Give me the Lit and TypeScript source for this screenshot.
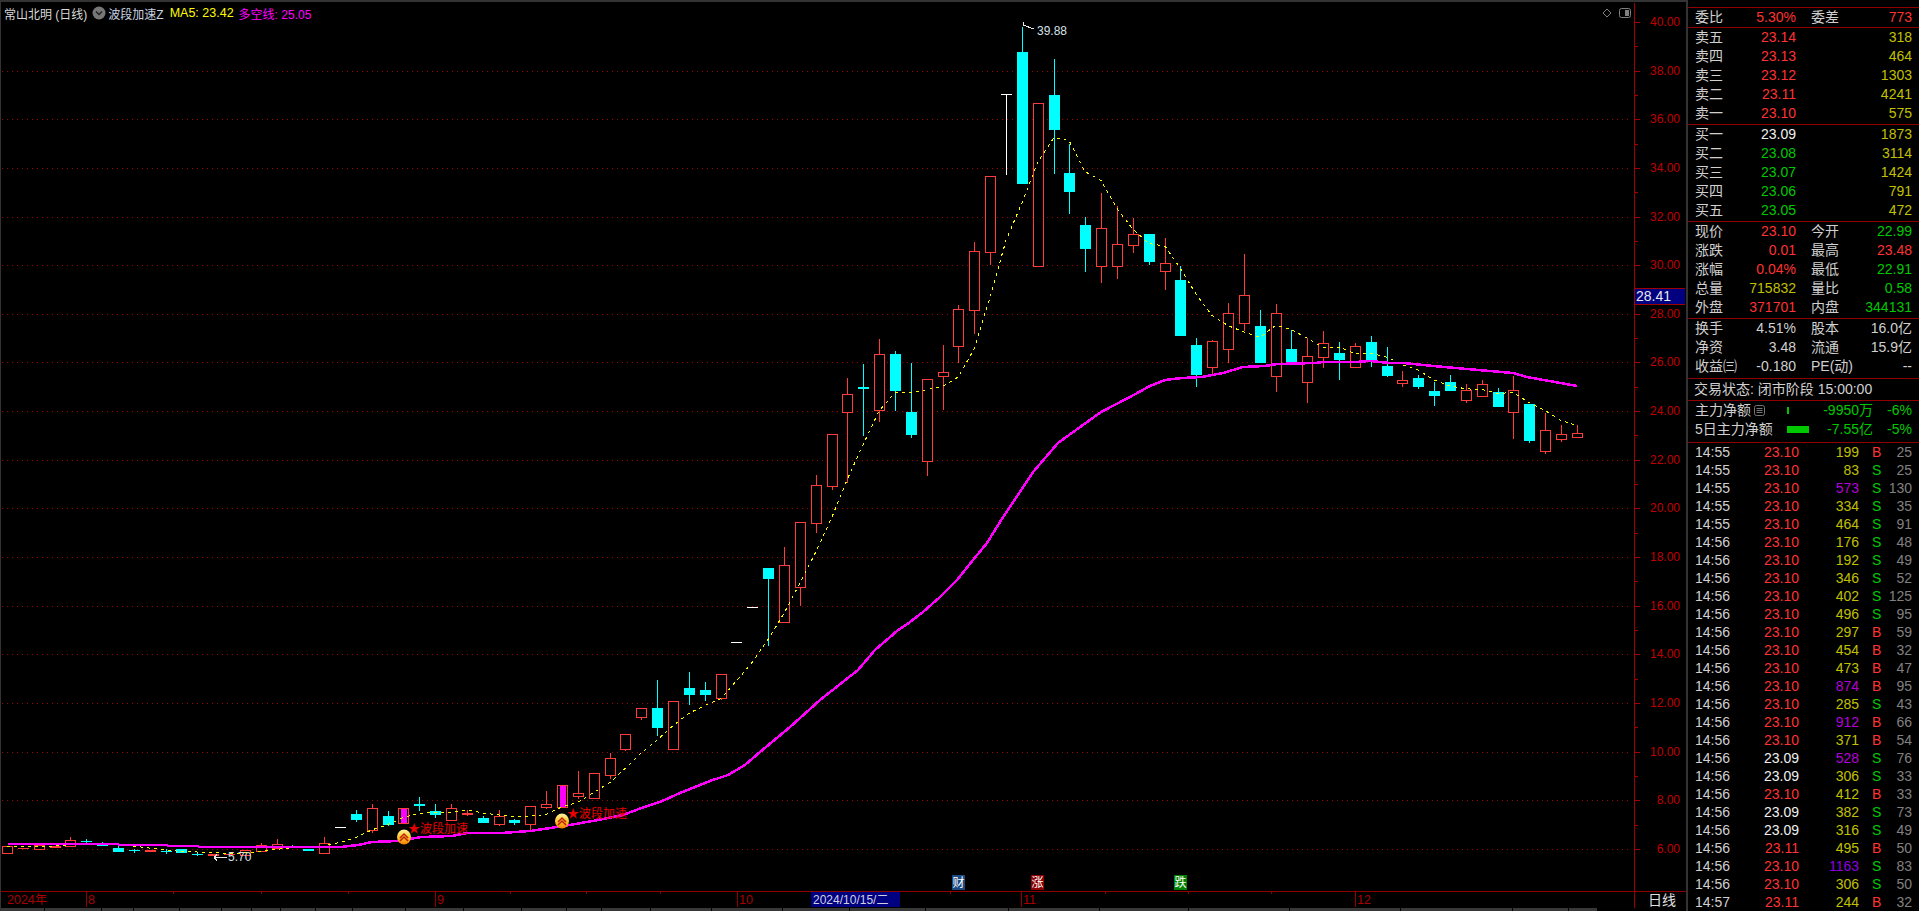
import { LitElement, html, css, svg } from "lit";
import { customElement } from "lit/decorators.js";

type C = [string, number, number, number, number];
// type, body top, body bottom, wick top, wick bottom (pixel rows on the plot)
const CANDLES: C[] = [
  ["r",846,852.7,846,854],["f",847.5,849,847.5,849],["r",845,848.5,845,849],["f",846,847.5,846,847.5],["r",840,846,837,846],
  ["c",841,842,839,843],["c",844,845.5,842,845.5],["c",848,852,845,852],["c",850,851,848.5,852.5],["f",850,852,850,852],
  ["c",851,852,849,854],["c",849,852.7,849,852.7],["c",853.5,854.5,852,856],["f",854,856,854,856],["f",853.5,855,853.5,855],
  ["r",850,855,850,855],["r",845,851,843,851],["r",844,848,839,848],["c",846,847,844.5,848],["c",849,851,849,851],
  ["r",843,852.7,837,852.7],["w",827,827,827,827],["c",814,820,810,822],["r",808,830,804,833],["c",816,825,811,826],
  ["m",808,823,808,823],["c",804,806,797,811],["c",811,815,804,818],["r",808,820,804,821],["f",813,815,810,816],
  ["c",818,823,816,823],["r",816,824,810,826],["c",820,823,819,825],["r",806,824,806,830],["r",804,807,791,809],
  ["m",785,807,785,807],["r",793,796,771,799],["r",773,798,773,798],["r",758,775,753,779],["r",734,749,734,751],
  ["r",708,717,708,720],["c",708,728,680,736],["r",701,749,701,749],["c",688,695,672,705],["c",690,695,682,701],
  ["r",674,698,674,700],["w",642,642,642,642],["w",607,607,607,607],["c",568,579,568,646],["r",565,622,547,622],
  ["r",522,587,522,606],["r",485,523,475,533],["r",434,486,434,490],["r",394,412,378,483],["c",387,389,364,436],
  ["r",354,410,339,422],["c",354,391,351,411],["c",412,435,363,438],["r",379,461,379,476],["r",372,376,345,410],
  ["r",309,346,305,363],["r",251,310,242,334],["r",176,252,176,265],["w",94,94,94,175],["c",52,184,27,184],
  ["r",103,266,103,266],["c",95,130,59,174],["c",173,192,144,214],["c",225,249,217,272],["r",228,266,193,283],
  ["r",244,266,206,279],["r",234,245,218,253],["c",234,262,234,265],["r",263,271,238,290],["c",280,336,266,336],
  ["c",345,375,338,387],["r",341,367,340,375],["r",313,349,303,363],["r",295,323,254,331],["c",326,363,310,363],
  ["r",313,376,304,392],["c",349,363,330,363],["r",356,382,338,403],["r",343,357,331,368],["c",353,360,342,380],
  ["r",346,367,343,368],["c",342,361,336,367],["c",366,376,347,377],["r",380,383,371,387],["c",378,387,375,389],
  ["c",391,396,382,406],["c",382,391,375,391],["r",390,400,384,403],["r",384,396,380,396],["c",392,407,388,407],
  ["r",390,412,376,439],["c",404,441,404,443],["r",430,451,413,454],["r",434,439,425,442],["r",433,437,425,438],
];

const MAGENTA = "8,844 118,844 119,845 167,845 168,846 198,846 199,847 341,847 358,845 372,842 398,841 421,837 452,836 467,833 501,833 530,831 564,826 598,820 623,815 644,807 660,802 680,793 710,781 728,775 745,765 760,752 790,727 820,700 858,670 875,650 897,631 910,622 923,612 940,597 957,580 973,560 987,543 1000,522 1034,471 1058,443 1101,412 1130,397 1150,386 1165,380 1182,378 1202,377 1223,373 1243,367 1265,366 1277,364 1315,363 1323,362 1355,362 1370,361 1390,363 1403,363 1433,366 1467,369 1513,373 1527,377 1577,386";

const PRICES = [40,38,36,34,32,30,28,26,24,22,20,18,16,14,12,10,8,6];
const priceY = (p: number) => Math.round(22 + (40 - p) * 24.32);
const candleX = (k: number) => Math.floor(7.5 + 15.857 * k);
const FOOT = [43,56,31,45,41,29,28,34,36,52,57,57,44,34,48,60,70,66,75,82,90,88,100,110,111,55,28];

const ma5 = () =>
  CANDLES.map((_, k) => {
    const w = CANDLES.slice(Math.max(0, k - 4), k + 1);
    const avg = w.reduce((s, c) => s + (c[0] === "c" ? c[2] : c[1]), 0) / w.length;
    return `${candleX(k)},${avg.toFixed(1)}`;
  }).join(" ");

const ASK = [["卖五","23.14","318"],["卖四","23.13","464"],["卖三","23.12","1303"],["卖二","23.11","4241"],["卖一","23.10","575"]];
const BID = [["买一","23.09","1873","wh"],["买二","23.08","3114","gr"],["买三","23.07","1424","gr"],["买四","23.06","791","gr"],["买五","23.05","472","gr"]];
const QUOTE = [
  ["现价","23.10","rd","今开","22.99","gr"],["涨跌","0.01","rd","最高","23.48","rd"],["涨幅","0.04%","rd","最低","22.91","gr"],
  ["总量","715832","yl","量比","0.58","gr"],["外盘","371701","rd","内盘","344131","gr"],
];
const STATS = [["换手","4.51%","股本","16.0亿"],["净资","3.48","流通","15.9亿"],["收益㈢","-0.180","PE(动)","--"]];
const TICKS: [string,string,string,string,string,string][] = [
  ["14:55","23.10","199","yl","B","25"],["14:55","23.10","83","yl","S","25"],["14:55","23.10","573","pu","S","130"],["14:55","23.10","334","yl","S","35"],
  ["14:55","23.10","464","yl","S","91"],["14:56","23.10","176","yl","S","48"],["14:56","23.10","192","yl","S","49"],["14:56","23.10","346","yl","S","52"],
  ["14:56","23.10","402","yl","S","125"],["14:56","23.10","496","yl","S","95"],["14:56","23.10","297","yl","B","59"],["14:56","23.10","454","yl","B","32"],
  ["14:56","23.10","473","yl","B","47"],["14:56","23.10","874","pu","B","95"],["14:56","23.10","285","yl","S","43"],["14:56","23.10","912","pu","B","66"],
  ["14:56","23.10","371","yl","B","54"],["14:56","23.09","528","pu","S","76"],["14:56","23.09","306","yl","S","33"],["14:56","23.10","412","yl","B","33"],
  ["14:56","23.09","382","yl","S","73"],["14:56","23.09","316","yl","S","49"],["14:56","23.11","495","yl","B","50"],["14:56","23.10","1163","vi","S","83"],
  ["14:56","23.10","306","yl","S","50"],["14:57","23.11","244","yl","B","32"],
];

@customElement("app-root")
export class AppRoot extends LitElement {
  static styles = css`
    :host { display: flex; width: 1919px; height: 911px; background: #000; overflow: hidden;
      font-family: "Liberation Sans", "Noto Sans CJK SC", sans-serif; color: #d0d0d0; }
    .chart { width: 1686px; height: 911px; display: flex; flex-direction: column; box-sizing: border-box;
      border-left: 1px solid #333; }
    .topline { height: 2px; background: #333; }
    .head { height: 22px; display: flex; align-items: center; gap: 5px; padding-left: 3px; font-size: 12px; white-space: nowrap; }
    .head .ma { color: #ffff00; margin-left: 1px; font-size: 12.5px; }
    .head .dk { color: #ff00ff; }
    .head .name { color: #d8d8d8; }
    .head .ind { color: #c8d4e0; margin-left: -3px; }
    .plot { display: block; width: 1685px; height: 884px; overflow: visible; }
    .foot { height: 3px; display: flex; gap: 1px; overflow: hidden; }
    .foot span { height: 3px; background: #383838; flex: none; }
    .plot text { font-family: "Liberation Sans", "Noto Sans CJK SC", sans-serif; font-size: 12px; }
    .axis { fill: #c00000; text-anchor: end; }
    .plot .time { fill: #a80000; font-size: 12.5px; }
    .sig { fill: #e80000; }
    .mark { fill: #d8e0e8; }
    .plot .cur { fill: #e8e8e8; font-size: 14px; }
    .date { fill: #d0d0e0; }
    .bd { fill: #fff; text-anchor: middle; }
    .plot .cycle { fill: #e0e0e0; font-size: 14px; }

    .panel { width: 233px; height: 911px; box-sizing: border-box; border-left: 2px solid #333; padding-top: 7px;
      font-size: 14px; line-height: 19px; white-space: nowrap; overflow: hidden; }
    .sec { border-top: 1px solid #900000; padding: 0 7px; }
    .pb1 { padding-bottom: 1px; }
    .pb2 { padding-bottom: 2px; }
    .pb3 { padding-bottom: 3px; }
    .row { display: grid; grid-template-columns: 101px 101px; column-gap: 15px; height: 19px; }
    .kv { display: flex; justify-content: space-between; }
    .state { height: 21px; line-height: 21px; margin-left: -1px; }
    .flow { display: grid; grid-template-columns: 92px 25px 61px 39px; height: 19px; }
    .flow .r { text-align: right; }
    .flow .lab { display: flex; align-items: center; gap: 3px; }
    .bar { height: 7px; align-self: center; background: #00c800; }
    .tick { display: grid; grid-template-columns: 50px 54px 60px 13px 40px; height: 18px; line-height: 18px; }
    .tick .p, .tick .v, .tick .n { text-align: right; }
    .tick .bs { padding-left: 13px; }
    .rd { color: #ff3232; } .gr { color: #00c800; } .yl { color: #c0c000; } .wh { color: #f0f0f0; }
    .pu { color: #b400d8; } .vi { color: #8c00e0; } .gy { color: #808080; }
  `;

  private renderCandle(c: C, k: number) {
    const [t, top, bot, hi, lo] = c;
    const x = candleX(k);
    if (t === "w") {
      return svg`<rect x=${x - 5} y=${top} width="11" height="1" fill="#fff"/><rect x=${x} y=${hi} width="1" height=${Math.max(lo - hi, 1)} fill="#fff"/>`;
    }
    if (t === "c") {
      return svg`<rect x=${x} y=${hi} width="1" height=${lo - hi} fill="#0ff"/><rect x=${x - 5} y=${top} width="11" height=${bot - top} fill="#0ff"/>`;
    }
    if (t === "f") {
      return svg`<rect x=${x} y=${hi} width="1" height=${lo - hi} fill="#ff3c3c"/><rect x=${x - 5} y=${top} width="11" height=${bot - top} fill="#ff3c3c"/>`;
    }
    return svg`<rect x=${x} y=${hi} width="1" height=${lo - hi} fill="#ff3c3c"/>
      <rect x=${x - 4.5} y=${Math.round(top) + 0.5} width="10" height=${Math.round(bot - top)} fill="#000" stroke="#ff3c3c"/>
      ${t === "m" ? svg`<rect x=${x - 2} y=${top + 1} width="6" height=${bot - top - 1} fill="#f0f"/>` : ""}`;
  }

  private renderSignal(x: number, y: number, tx: number, ty: number) {
    return svg`<ellipse cx=${x} cy=${y} rx="7" ry="7.500" fill="url(#gold)" shape-rendering="auto"/>
      <path d="M${x - 4} ${y + 1}L${x} ${y - 3}L${x + 4} ${y + 1}M${x - 4} ${y + 4}L${x} ${y}L${x + 4} ${y + 4}" fill="none" stroke="#c02000" stroke-width="1.5" shape-rendering="auto"/>
      <text class="sig" x=${tx} y=${ty}>★波段加速</text>`;
  }

  private renderPlot() {
    const grid = PRICES.filter((p) => p !== 40).map((p) => priceY(p));
    const minor = PRICES.slice(0, -1).map((p) => priceY(p - 1));
    return svg`<svg class="plot" viewBox="1 24 1685 884" shape-rendering="crispEdges">
      <defs><linearGradient id="gold" x1="0" y1="0" x2="0" y2="1">
        <stop offset="0" stop-color="#fff4a0"/><stop offset="0.5" stop-color="#ffc830"/><stop offset="1" stop-color="#f08000"/>
      </linearGradient></defs>
      ${grid.map((y) => svg`<line x1="2" x2="1632" y1=${y + 0.5} y2=${y + 0.5} stroke="#a00000" stroke-dasharray="1 4"/>`)}
      ${CANDLES.map((c, k) => this.renderCandle(c, k))}
      <polyline points=${ma5()} fill="none" stroke="#ffff00" stroke-width="1" stroke-dasharray="3 4"/>
      <polyline points=${MAGENTA} fill="none" stroke="#ff00ff" stroke-width="2.5"/>

      <path d="M1034 29L1023 25M1023 25h3M1023 25v-3" fill="none" stroke="#e8e8e8"/>
      <text class="mark" x="1037" y="35">39.88</text>
      <path d="M227 857.5H214M214 857.5l3-3M214 857.5l3 3" fill="none" stroke="#e8e8e8"/>
      <text class="mark" x="228" y="861">5.70</text>
      ${this.renderSignal(404, 837, 408, 833)}
      ${this.renderSignal(562, 821, 567, 818)}

      <path d="M1607 9l4 4l-4 4l-4-4z" fill="none" stroke="#808080" shape-rendering="auto"/>
      <rect x="1619.5" y="8.5" width="11" height="9" rx="2" fill="none" stroke="#808080" shape-rendering="auto"/>
      <rect x="1625" y="10" width="4" height="6" fill="#808080"/>

      <rect x="1634" y="3" width="1" height="905" fill="#a00000"/>
      ${PRICES.map((p) => svg`<rect x="1635" y=${priceY(p)} width="5" height="1" fill="#a00000"/>
        <text class="axis" x="1680" y=${priceY(p) + 4}>${p.toFixed(2)}</text>`)}
      ${minor.map((y) => svg`<rect x="1635" y=${y} width="3" height="1" fill="#a00000"/>`)}

      <rect x="1635" y="288" width="50" height="17" fill="#000080"/>
      <rect x="1635" y="288" width="50" height="1" fill="#a00000"/>
      <rect x="1635" y="304" width="50" height="1" fill="#a00000"/>
      <text class="cur" x="1636" y="301">28.41</text>

      <rect x="952" y="875" width="13" height="15" fill="#1a4a80"/><text class="bd" x="958.5" y="887">财</text>
      <rect x="1031" y="875" width="13" height="15" fill="#8b0000"/><text class="bd" x="1037.5" y="887">涨</text>
      <rect x="1174" y="875" width="13" height="15" fill="#008000"/><text class="bd" x="1180.5" y="887">跌</text>

      <rect x="1" y="891" width="1685" height="1" fill="#900000"/>
      ${[173,261,348,510,586,660,820,950,1105,1188,1271].map((x) => svg`<rect x=${x} y="892" width="1" height="2" fill="#900000"/>`)}
      ${[[86,"8"],[435,"9"],[737,"10"],[1021,"11"],[1355,"12"]].map(([x, t]) => svg`
        <rect x=${x} y="892" width="1" height="15" fill="#900000"/>
        <text class="time" x=${(x as number) + 2} y="904">${t}</text>`)}
      <text class="time" x="7" y="904">2024年</text>
      <rect x="811" y="892" width="89" height="15" fill="#000080"/>
      <text class="date" x="813" y="904">2024/10/15/二</text>
      <text class="cycle" x="1648" y="905">日线</text>
    </svg>`;
  }

  private renderPanel() {
    return html`<div class="panel">
      <div class="sec"><div class="row"><div class="kv"><span>委比</span><span class="rd">5.30%</span></div><div class="kv"><span>委差</span><span class="rd">773</span></div></div></div>
      <div class="sec pb1">${ASK.map((a) => html`<div class="row"><div class="kv"><span>${a[0]}</span><span class="rd">${a[1]}</span></div><div class="kv"><span></span><span class="yl">${a[2]}</span></div></div>`)}</div>
      <div class="sec pb1">${BID.map((a) => html`<div class="row"><div class="kv"><span>${a[0]}</span><span class=${a[3]}>${a[1]}</span></div><div class="kv"><span></span><span class="yl">${a[2]}</span></div></div>`)}</div>
      <div class="sec pb1">${QUOTE.map((q) => html`<div class="row"><div class="kv"><span>${q[0]}</span><span class=${q[2]}>${q[1]}</span></div><div class="kv"><span>${q[3]}</span><span class=${q[5]}>${q[4]}</span></div></div>`)}</div>
      <div class="sec pb2">${STATS.map((s) => html`<div class="row"><div class="kv"><span>${s[0]}</span><span>${s[1]}</span></div><div class="kv"><span>${s[2]}</span><span>${s[3]}</span></div></div>`)}</div>
      <div class="sec"><div class="state">交易状态: 闭市阶段 15:00:00</div></div>
      <div class="sec pb3">
        <div class="flow"><span class="lab">主力净额<svg width="11" height="11" viewBox="0 0 11 11"><rect x="0.5" y="0.5" width="10" height="10" rx="2" fill="none" stroke="#777"/><path d="M2.500 3.500h6M2.500 5.500h6M2.500 7.500h6" stroke="#777"/></svg></span><span class="bar" style="width:2px"></span><span class="r gr">-9950万</span><span class="r gr">-6%</span></div>
        <div class="flow"><span>5日主力净额</span><span class="bar" style="width:22px"></span><span class="r gr">-7.55亿</span><span class="r gr">-5%</span></div>
      </div>
      <div class="sec">${TICKS.map((t) => html`<div class="tick"><span>${t[0]}</span><span class="p ${t[1] === "23.09" ? "wh" : "rd"}">${t[1]}</span><span class="v ${t[3]}">${t[2]}</span><span class="bs ${t[4] === "B" ? "rd" : "gr"}">${t[4]}</span><span class="n gy">${t[5]}</span></div>`)}</div>
    </div>`;
  }

  render() {
    return html`<div class="chart">
        <div class="topline"></div>
        <div class="head">
          <span class="name">常山北明 (日线)</span>
          <svg width="14" height="14" viewBox="0 0 14 14"><circle cx="7" cy="7" r="6.500" fill="#777"/><path d="M4 5.500L7 8.500L10 5.500" fill="none" stroke="#222" stroke-width="1.500"/></svg>
          <span class="ind">波段加速Z</span>
          <span class="ma">MA5: 23.42</span>
          <span class="dk">多空线: 25.05</span>
        </div>
        ${this.renderPlot()}
        <div class="foot">${FOOT.map((w) => html`<span style="width:${w}px"></span>`)}</div>
      </div>
      ${this.renderPanel()}`;
  }
}
